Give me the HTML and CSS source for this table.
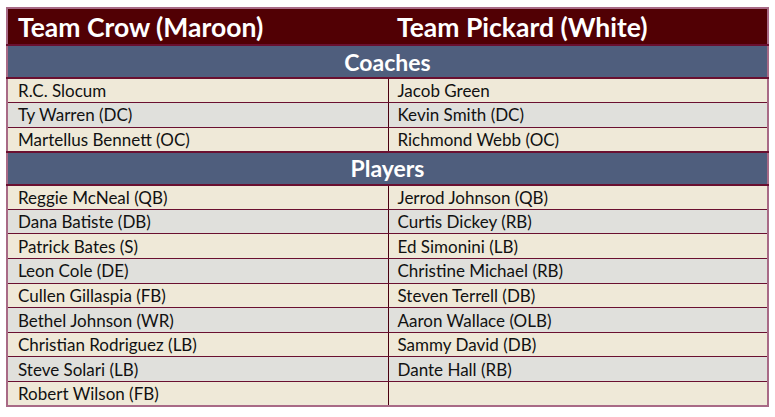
FILE: index.html
```html
<!DOCTYPE html>
<html>
<head>
<meta charset="utf-8">
<link rel="stylesheet" href="styles.css">
</head>
<body>
<table class="roster">
  <colgroup><col class="col-left"><col class="col-right"></colgroup>
  <thead>
    <tr class="team-row"><th>Team Crow (Maroon)</th><th>Team Pickard (White)</th></tr>
  </thead>
  <tbody>
    <tr class="section-row"><td colspan="2">Coaches</td></tr>
    <tr class="odd"><td>R.C. Slocum</td><td>Jacob Green</td></tr>
    <tr class="even"><td>Ty Warren (DC)</td><td>Kevin Smith (DC)</td></tr>
    <tr class="odd"><td>Martellus Bennett (OC)</td><td>Richmond Webb (OC)</td></tr>
    <tr class="section-row"><td colspan="2">Players</td></tr>
    <tr class="odd"><td>Reggie McNeal (QB)</td><td>Jerrod Johnson (QB)</td></tr>
    <tr class="even"><td>Dana Batiste (DB)</td><td>Curtis Dickey (RB)</td></tr>
    <tr class="odd"><td>Patrick Bates (S)</td><td>Ed Simonini (LB)</td></tr>
    <tr class="even"><td>Leon Cole (DE)</td><td>Christine Michael (RB)</td></tr>
    <tr class="odd"><td>Cullen Gillaspia (FB)</td><td>Steven Terrell (DB)</td></tr>
    <tr class="even"><td>Bethel Johnson (WR)</td><td>Aaron Wallace (OLB)</td></tr>
    <tr class="odd"><td>Christian Rodriguez (LB)</td><td>Sammy David (DB)</td></tr>
    <tr class="even"><td>Steve Solari (LB)</td><td>Dante Hall (RB)</td></tr>
    <tr class="odd"><td>Robert Wilson (FB)</td><td></td></tr>
  </tbody>
</table>
</body>
</html>
```

FILE: styles.css
```css
html, body {
  margin: 0;
  padding: 0;
  background: #ffffff;
}
body {
  padding: 7px 0 0 6px;
  font-family: Lato, "Open Sans", sans-serif;
  color: #111111;
}
.roster {
  border-collapse: collapse;
  width: 761px;
  table-layout: fixed;
  border: 2px solid #a86a86;
}
.col-left { width: 381px; }
.col-right { width: 380px; }
.team-row th {
  background: #510004;
  color: #ffffff;
  font-weight: 700;
  font-size: 26.5px;
  text-align: left;
  height: 37px;
  padding: 0 0 0 10px;
  box-sizing: border-box;
  border: none;
  vertical-align: middle;
}
.team-row th + th { padding-left: 9px; }
.section-row td {
  background: #4f5e7d;
  color: #ffffff;
  font-weight: 700;
  font-size: 23px;
  text-align: center;
  height: 33px;
  padding: 0;
  box-sizing: border-box;
  border-top: 2px solid #6a1030;
  border-bottom: 2px solid #6a1030;
}
.odd td, .even td {
  font-size: 17px;
  height: 24.6px;
  padding: 0 0 0 10px;
  box-sizing: border-box;
  border-top: 1px solid #6a1030;
  border-bottom: 1px solid #6a1030;
  vertical-align: middle;
  line-height: 1;
}
.odd td + td, .even td + td {
  border-left: 1px solid #4a0010;
  padding-left: 9px;
}
.odd td { background: #efe9d8; }
.even td { background: #e0e0dc; }
```
